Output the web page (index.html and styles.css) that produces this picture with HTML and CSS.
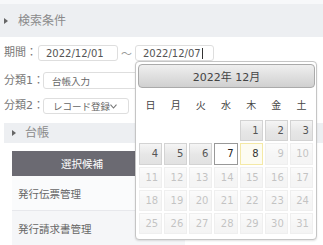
FILE: index.html
```html
<!DOCTYPE html>
<html lang="ja">
<head>
<meta charset="utf-8">
<title>検索条件</title>
<link rel="stylesheet" href="styles.css">
</head>
<body>
<div class="topstrip"></div>
<div class="sec-head"><span class="tri"></span><span class="sec-title">検索条件</span></div>
<div class="form">
  <div class="row r1">
    <span class="lbl w1">期間：</span>
    <div class="field f1">2022/12/01</div>
    <span class="tilde">～</span>
    <div class="field f2">2022/12/07<span class="caret"></span></div>
  </div>
  <div class="row r2">
    <span class="lbl w2">分類1：</span>
    <div class="field f3 jp">台帳入力</div>
  </div>
  <div class="row r3">
    <span class="lbl w2">分類2：</span>
    <div class="field sel jp">レコード登録<svg class="chev" viewBox="0 0 7 5" width="7" height="5"><polyline points="0.5,0.6 3.5,4 6.5,0.6" fill="none" stroke="#777" stroke-width="1.1"/></svg></div>
  </div>
</div>
<div class="band"><span class="tri"></span><span class="band-title">台帳</span></div>
<div class="list">
  <div class="list-head"><div class="lh1">選択候補</div><div class="lh2"></div></div>
  <div class="list-row">発行伝票管理</div>
  <div class="list-row alt">発行請求書管理</div>
</div>

<div class="dp">
  <div class="dp-head">2022年 12月</div>
  <div class="dp-grid">
    <div class="wd">日</div><div class="wd">月</div><div class="wd">火</div><div class="wd">水</div><div class="wd">木</div><div class="wd">金</div><div class="wd">土</div>

    <div class="c"></div><div class="c"></div><div class="c"></div><div class="c"></div>
    <div class="c"><span class="d">1</span></div><div class="c"><span class="d">2</span></div><div class="c"><span class="d">3</span></div>

    <div class="c"><span class="d">4</span></div><div class="c"><span class="d">5</span></div><div class="c"><span class="d">6</span></div>
    <div class="c"><span class="d active">7</span></div><div class="c"><span class="d today">8</span></div>
    <div class="c"><span class="d off">9</span></div><div class="c"><span class="d off">10</span></div>

    <div class="c"><span class="d off">11</span></div><div class="c"><span class="d off">12</span></div><div class="c"><span class="d off">13</span></div><div class="c"><span class="d off">14</span></div><div class="c"><span class="d off">15</span></div><div class="c"><span class="d off">16</span></div><div class="c"><span class="d off">17</span></div>

    <div class="c"><span class="d off">18</span></div><div class="c"><span class="d off">19</span></div><div class="c"><span class="d off">20</span></div><div class="c"><span class="d off">21</span></div><div class="c"><span class="d off">22</span></div><div class="c"><span class="d off">23</span></div><div class="c"><span class="d off">24</span></div>

    <div class="c"><span class="d off">25</span></div><div class="c"><span class="d off">26</span></div><div class="c"><span class="d off">27</span></div><div class="c"><span class="d off">28</span></div><div class="c"><span class="d off">29</span></div><div class="c"><span class="d off">30</span></div><div class="c"><span class="d off">31</span></div>
  </div>
</div>
</body>
</html>
```
FILE: styles.css
```css
html, body {
  margin: 0;
  padding: 0;
}
body {
  position: relative;
  width: 323px;
  height: 245px;
  overflow: hidden;
  background: #fff;
  font-family: "DejaVu Sans", "Noto Sans CJK JP", sans-serif;
  color: #555;
}
.topstrip {
  height: 4px;
  background: #f7f8fa;
}
.sec-head {
  height: 33px;
  background: #edeff2;
  display: flex;
  align-items: center;
  padding-left: 4px;
}
.tri {
  width: 0;
  height: 0;
  border-left: 4px solid #666;
  border-top: 3px solid transparent;
  border-bottom: 3px solid transparent;
}
.sec-title {
  margin-left: 10px;
  font-size: 12px;
  color: #8a8a8a;
  line-height: 16px;
}
.form {
  padding-left: 4px;
}
.row {
  display: flex;
  align-items: center;
}
.r1 { margin-top: 8px; height: 16px; }
.r2 { margin-top: 11px; height: 17px; }
.r3 { margin-top: 9px; height: 16px; }
.lbl {
  font-size: 11px;
  color: #777;
  white-space: nowrap;
  line-height: 14px;
}
.w1 { width: 34px; }
.w2 { width: 39px; }
.field {
  box-sizing: border-box;
  height: 100%;
  border: 1px solid #dedede;
  border-radius: 3px;
  background: #fff;
  font-size: 10px;
  color: #555;
  padding-left: 7px;
  display: flex;
  align-items: center;
  white-space: nowrap;
}
.field.jp {
  font-size: 9.5px;
  color: #666;
}
.f1 { width: 80px; }
.f2 { width: 79px; }
.f3 { width: 140px; padding-left: 8px; }
.sel { width: 86px; padding-left: 9px; }
.tilde {
  width: 17px;
  text-align: center;
  font-size: 11px;
  color: #999;
}
.caret {
  width: 1px;
  height: 11px;
  background: #333;
  margin-left: 1px;
}
.chev {
  margin-left: auto;
  margin-right: 11px;
}
.band {
  margin: 9px 0 0 4px;
  height: 20px;
  background: #edeff2;
  display: flex;
  align-items: center;
  padding-left: 8px;
}
.band-title {
  margin-left: 9px;
  font-size: 12px;
  color: #8a8a8a;
  line-height: 16px;
}
.list {
  margin: 8px 0 0 12px;
  width: 173px;
}
.list-head {
  display: flex;
  height: 25px;
  background: #6b6a72;
}
.lh1 {
  width: 140px;
  display: flex;
  align-items: center;
  justify-content: center;
  color: #fff;
  font-size: 10.5px;
}
.lh2 {
  flex: 1;
}
.list-row {
  box-sizing: border-box;
  height: 35px;
  border-bottom: 1px solid #e7e8ec;
  display: flex;
  align-items: center;
  padding-left: 6px;
  background: #fafbfc;
  font-size: 10.5px;
  color: #666;
}
.list-row.alt {
  background: #f5f6f8;
}

/* datepicker overlay */
.dp {
  position: absolute;
  left: 135px;
  top: 61px;
  width: 176px;
  padding: 2px 2px 3.5px;
  border: 1px solid #c5c5c5;
  border-radius: 4px;
  background: #fff;
  box-shadow: 0 1px 2px rgba(0, 0, 0, 0.12);
}
.dp-head {
  box-sizing: border-box;
  width: 177px;
  height: 24px;
  border: 1px solid #aaa;
  border-radius: 4px;
  background: linear-gradient(#efefef, #d0d0d0);
  display: flex;
  align-items: center;
  justify-content: center;
  font-size: 11px;
  color: #444;
}
.dp-grid {
  display: grid;
  grid-template-columns: repeat(7, 1fr);
}
.wd {
  height: 31px;
  padding-top: 1px;
  box-sizing: border-box;
  display: flex;
  align-items: center;
  justify-content: center;
  font-size: 10px;
  color: #444;
}
.c {
  padding: 1px;
}
.d {
  display: block;
  box-sizing: border-box;
  height: 21.3px;
  line-height: 19.3px;
  border: 1px solid #d3d3d3;
  background: linear-gradient(#f5f5f5, #e6e6e6 55%, #e2e2e2);
  text-align: right;
  padding-right: 3px;
  font-size: 10px;
  color: #555;
}
.d.active {
  border-color: #999;
  background: #fff;
  color: #212121;
}
.d.today {
  border-color: #f4e9a6;
  background: #fdfcf2;
  color: #363636;
}
.d.off {
  opacity: 0.35;
}
```
